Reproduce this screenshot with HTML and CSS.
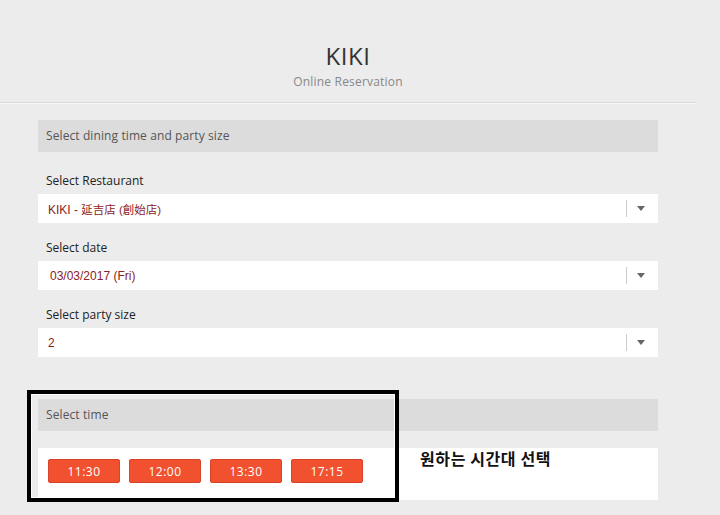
FILE: index.html
```html
<!DOCTYPE html>
<html lang="en">
<head>
  <meta charset="UTF-8" />
  <title>KIKI - Online Reservation</title>
  <link rel="stylesheet" href="styles.css">
</head>
<body>
  <div class="page">
    <div class="header">
      <h1>KIKI</h1>
      <p>Online Reservation</p>
    </div>

    <div class="content">
      <div class="section-bar">Select dining time and party size</div>

      <div class="field first">
        <label>Select Restaurant</label>
        <div class="select">
          <span class="value">KIKI - <span class="cjk">延吉店 (創始店)</span></span>
          <span class="arrow"></span>
        </div>
      </div>

      <div class="field">
        <label>Select date</label>
        <div class="select">
          <span class="value date">03/03/2017 (Fri)</span>
          <span class="arrow"></span>
        </div>
      </div>

      <div class="field">
        <label>Select party size</label>
        <div class="select">
          <span class="value">2</span>
          <span class="arrow"></span>
        </div>
      </div>

      <div class="time-section">
        <div class="section-bar">Select time</div>
        <div class="time-panel">
          <button class="time-btn">11:30</button>
          <button class="time-btn">12:00</button>
          <button class="time-btn">13:30</button>
          <button class="time-btn">17:15</button>
        </div>

        <!-- annotation -->
        <div class="highlight"></div>
        <div class="note">원하는 시간대 선택</div>
      </div>
    </div>
  </div>
</body>
</html>
```

FILE: styles.css
```css
* {
  box-sizing: border-box;
  margin: 0;
  padding: 0;
}

body {
  background-color: #ececec;
  font-family: 'Open Sans', 'Noto Sans', sans-serif;
  color: #333;
  height: 515px;
  overflow: hidden;
}

.page {
  width: 696px;
}

.header {
  height: 103px;
  padding-top: 40px;
  text-align: center;
  border-bottom: 1px solid #dadada;
  box-shadow: 0 1px 0 #f7f7f7;
}

.header h1 {
  font-size: 24px;
  font-weight: 400;
  line-height: 32px;
  color: #333;
  letter-spacing: 0.5px;
}

.header p {
  font-size: 12px;
  line-height: 16px;
  margin-top: 2px;
  color: #888;
  letter-spacing: 0.2px;
}

.content {
  width: 620px;
  margin-left: 38px;
  padding-top: 17px;
}

.section-bar {
  background-color: #dcdcdc;
  height: 32px;
  line-height: 32px;
  padding-left: 8px;
  font-size: 12px;
  color: #555;
  letter-spacing: 0.1px;
}

.field {
  margin-top: 14px;
}

.field.first {
  margin-top: 18px;
}

.field label {
  display: block;
  height: 20px;
  line-height: 22px;
  padding-left: 8px;
  font-size: 12px;
  color: #222;
  margin-bottom: 4px;
}

.select {
  position: relative;
  background-color: #fff;
  height: 29px;
  display: flex;
  align-items: center;
  padding-left: 10px;
}

.select .value {
  font-family: 'Liberation Sans', 'Noto Sans CJK TC', sans-serif;
  font-size: 12px;
  color: #8b2323;
}

.select .value .cjk {
  font-size: 11.5px;
}

.select .value.date {
  padding-left: 2px;
}

.select .arrow {
  position: absolute;
  right: 13px;
  top: 12px;
  width: 0;
  height: 0;
  border-left: 4px solid transparent;
  border-right: 4px solid transparent;
  border-top: 5px solid #666;
}

.select::before {
  content: '';
  position: absolute;
  right: 31px;
  top: 6px;
  width: 1px;
  height: 17px;
  background-color: #ccc;
}

.time-section {
  position: relative;
  margin-top: 42px;
}

.time-panel {
  background-color: #fff;
  margin-top: 17px;
  height: 52px;
  padding: 11px 10px;
  display: flex;
  gap: 9px;
}

.time-btn {
  width: 72px;
  height: 24px;
  background-color: #f1512f;
  border: 1px solid #d9432a;
  border-radius: 2px;
  color: #fff;
  font-family: 'Open Sans', sans-serif;
  font-size: 12px;
  letter-spacing: 0.5px;
}

.highlight {
  position: absolute;
  left: -11px;
  top: -9px;
  width: 372px;
  height: 112px;
  border: 4px solid #000;
  box-shadow: inset 0 0 0 1px #fff;
}

.note {
  position: absolute;
  left: 382px;
  top: 49px;
  font-family: 'Noto Sans CJK KR', sans-serif;
  font-size: 16px;
  font-weight: 700;
  color: #111;
  line-height: 20px;
  letter-spacing: 0.6px;
}
```
